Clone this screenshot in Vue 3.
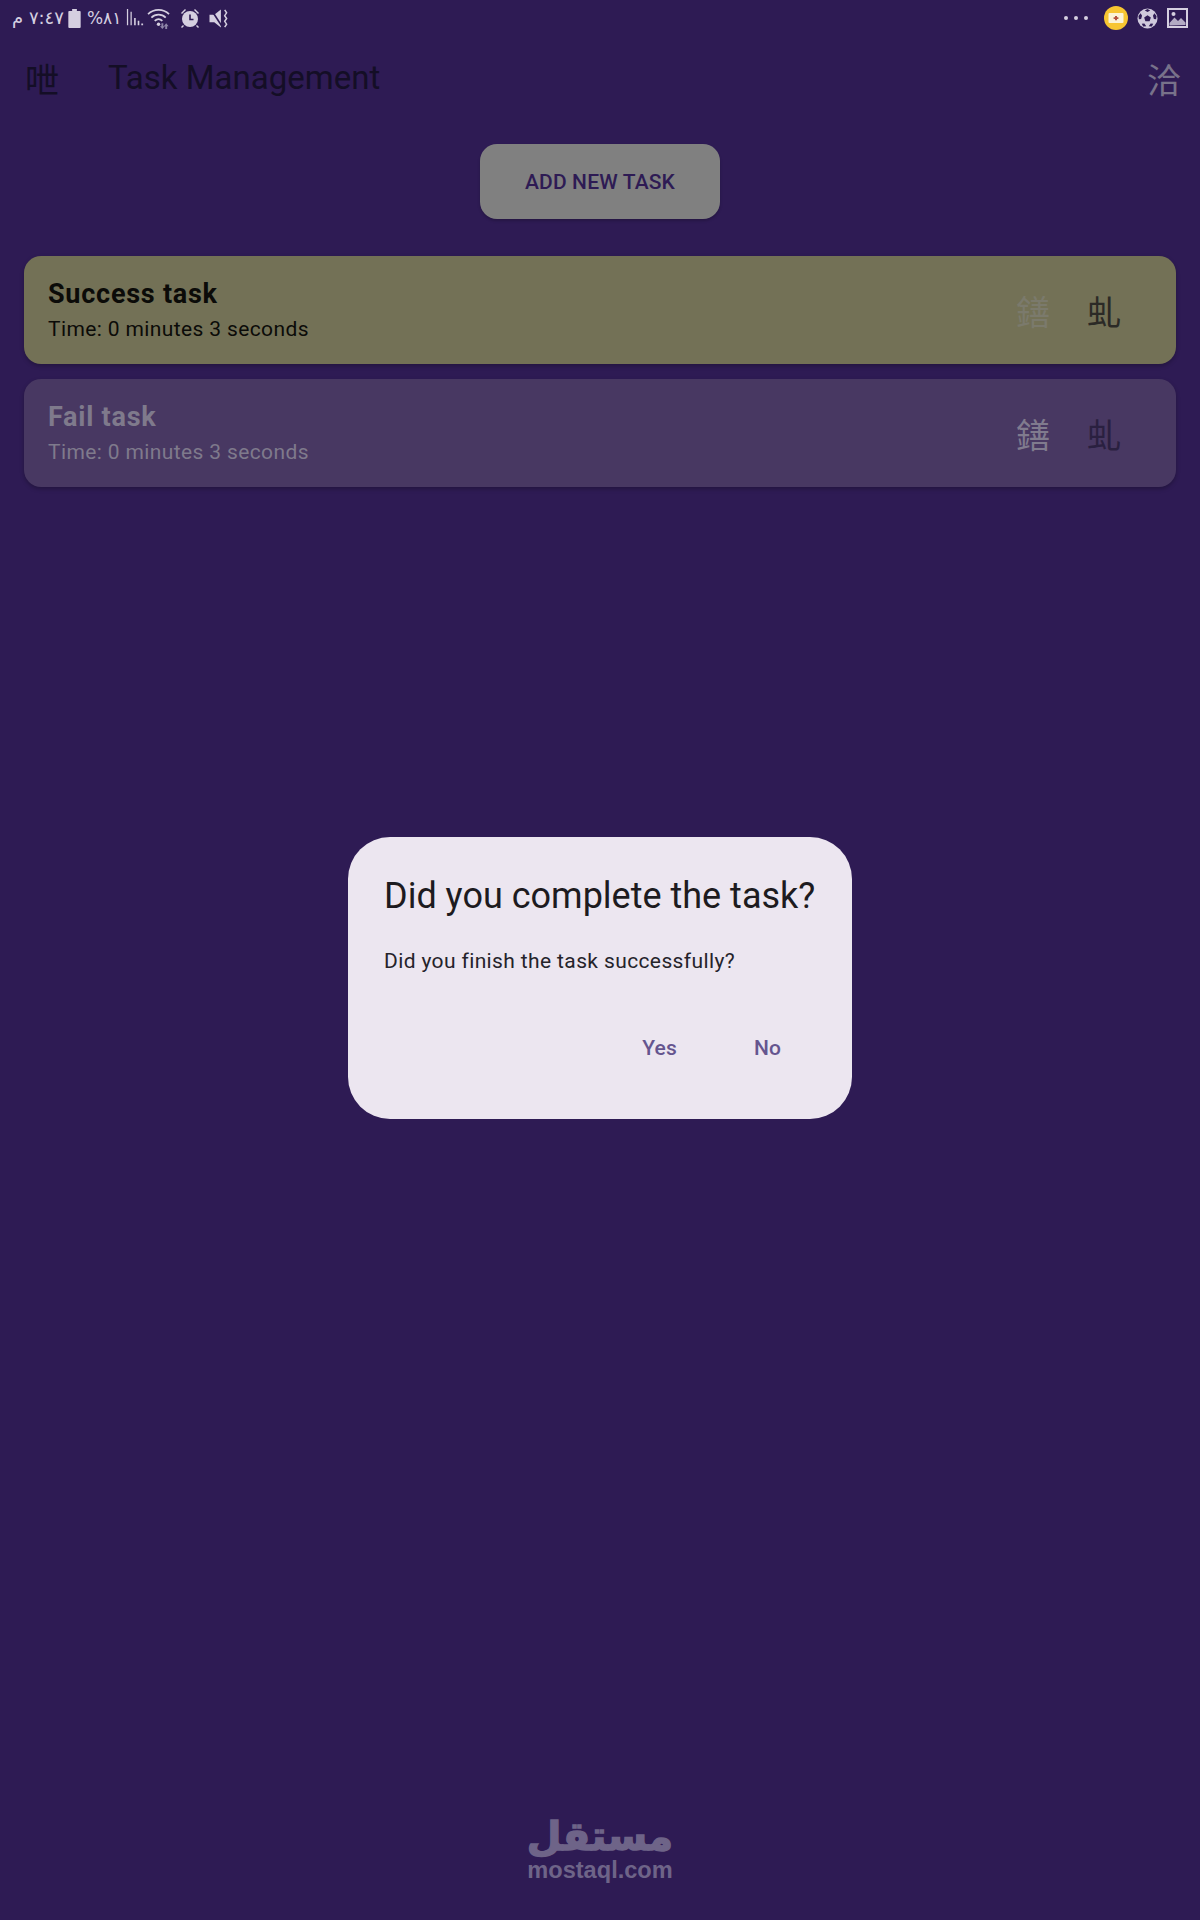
<template>
  <div class="screen">
    <!-- status bar -->
    <div class="status-bar">
      <div class="status-left">
        <span class="status-time" dir="rtl">٧:٤٧ م</span>
        <svg class="ic-battery" viewBox="0 0 13 20"><path d="M4 0h5v2h3a1 1 0 0 1 1 1v16a1 1 0 0 1-1 1H1a1 1 0 0 1-1-1V3a1 1 0 0 1 1-1h3z" /></svg>
        <span class="status-percent" dir="rtl">٨١%</span>
        <svg class="ic-signal" viewBox="0 0 20 20"><path d="M1 0h1.400v18H1zM5 3h1.400v15H5zM9 10h1.800v8H9zM13 13h1.800v5H13zM17 16h2v2h-2z" /></svg>
        <svg class="ic-wifi" viewBox="0 0 26 22">
          <path class="wifi-arc" d="M1 6.500C7 .5 17 .5 23 6.500M4.500 10C8.500 6 15.500 6 19.500 10M8 13.500c2.500-2.500 5.500-2.500 8 0" />
          <circle cx="12" cy="17" r="1.800" />
          <path class="wifi-dim" d="M15 16h2v3h1.500l-2.500 3-2.500-3H15zM21 22h-2v-3h-1.500l2.500-3 2.500 3H21z" />
        </svg>
        <svg class="ic-alarm" viewBox="0 0 20 20">
          <circle cx="10" cy="11" r="8" />
          <path d="M1 5l4-4 1 1-4 4zM19 5l-4-4-1 1 4 4zM3 17l-2 2 1 1 2-2zM17 17l2 2-1 1-2-2z" />
          <path class="alarm-hand" d="M10 6.500V11.500h3.500" />
        </svg>
        <svg class="ic-mute" viewBox="0 0 20 20">
          <path d="M0 6h5l7-5.500v19L5 14H0z" />
          <path class="mute-slash" d="M2 1l11 17" />
          <path class="mute-wave" d="M16 1l2 3-2 3 2 3-2 3 2 3-2 3" />
        </svg>
      </div>
      <div class="status-right">
        <span class="status-dots"><i></i><i></i><i></i></span>
        <svg class="ic-coin" viewBox="0 0 24 24">
          <circle cx="12" cy="12" r="12" fill="#f7c531" />
          <rect x="4.500" y="7" width="15" height="10" rx="1" fill="#fbf3d6" />
          <path d="M11 10h2v1.300h1.400v1.600H13v1.300h-2v-1.300H9.600v-1.600H11z" fill="#b5523f" />
        </svg>
        <svg class="ic-ball" viewBox="0 0 22 22">
          <circle cx="11" cy="11" r="10.500" fill="#cfc9dc" />
          <path d="M11 7.500l3.500 2.500-1.300 4H8.800L7.500 10zM11 1l2.800 1.500L11 4.300 8.200 2.500zM1.500 8.500l2.300-3 1.500 2.500-1 3.500-2.300.3zM20.500 8.500l-2.300-3-1.500 2.500 1 3.500 2.300.3zM6.500 19.500l-1.500-3 2.700-.2 2 2.700zM15.500 19.500l1.500-3-2.700-.2-2 2.700z" fill="#2e1b54" />
        </svg>
        <svg class="ic-image" viewBox="0 0 21 20">
          <path d="M0 0h21v20H0zM2 2v16h17V2z" />
          <path class="image-dim" d="M2.500 17.500V15l5-5.500 3.500 3.500 3-3 4.500 4.500v2.500z" />
          <circle cx="6.500" cy="6" r="2" />
        </svg>
      </div>
    </div>

    <!-- app bar -->
    <header class="app-bar">
      <span class="bar-icon menu-icon">呭</span>
      <h1 class="bar-title">Task Management</h1>
      <span class="bar-icon lang-icon">洽</span>
    </header>

    <div class="add-row">
      <button class="add-button">ADD NEW TASK</button>
    </div>

    <!-- tasks -->
    <div class="task-list">
      <div v-for="task in tasks" :key="task.name" class="task-card" :class="task.state">
        <div class="task-text">
          <div class="task-name">{{ task.name }}</div>
          <div class="task-time">{{ task.time }}</div>
        </div>
        <div class="task-actions">
          <span class="action-icon check-icon">鐥</span>
          <span class="action-icon delete-icon">虬</span>
        </div>
      </div>
    </div>

    <!-- dialog -->
    <div class="dialog-layer">
      <div class="dialog">
        <h2 class="dialog-title">Did you complete the task?</h2>
        <p class="dialog-body">Did you finish the task successfully?</p>
        <div class="dialog-actions">
          <button class="dialog-button">Yes</button>
          <button class="dialog-button">No</button>
        </div>
      </div>
    </div>

    <!-- watermark -->
    <div class="watermark">
      <div class="watermark-ar" dir="rtl">مستقل</div>
      <div class="watermark-en">mostaql.com</div>
    </div>
  </div>
</template>

<script setup>
import { ref } from 'vue'

const tasks = ref([
  { name: 'Success task', time: 'Time: 0 minutes 3 seconds', state: 'done' },
  { name: 'Fail task', time: 'Time: 0 minutes 3 seconds', state: 'failed' }
])
</script>

<style>
html,
body {
  margin: 0;
  background: #2e1b54;
}
</style>

<style scoped>
.screen {
  position: relative;
  width: 1200px;
  height: 1920px;
  overflow: hidden;
  background: #2e1b54;
  font-family: Roboto, "Noto Sans CJK SC", sans-serif;
}

/* status bar */
.status-bar {
  height: 36px;
  padding: 0 12px;
  display: flex;
  align-items: center;
  justify-content: space-between;
  color: #d5cfe0;
}

.status-left,
.status-right {
  display: flex;
  align-items: center;
}

.status-left svg,
.status-right svg {
  fill: #d5cfe0;
  flex: none;
}

.status-time,
.status-percent {
  font-family: "DejaVu Sans", sans-serif;
  font-size: 18px;
  line-height: 20px;
  white-space: nowrap;
}

.status-percent {
  font-size: 17px;
  margin-left: 6px;
}

.ic-battery {
  width: 13px;
  height: 19px;
  margin-left: 4px;
}

.ic-signal {
  width: 18px;
  height: 18px;
  margin-left: 5px;
}

.ic-wifi {
  width: 25px;
  height: 21px;
  margin-left: 3px;
}

.wifi-arc {
  fill: none;
  stroke: #d5cfe0;
  stroke-width: 1.800;
}

.status-left .wifi-dim {
  fill: #8f86a8;
}

.ic-alarm {
  width: 20px;
  height: 20px;
  margin-left: 8px;
}

.alarm-hand {
  fill: none;
  stroke: #2e1b54;
  stroke-width: 1.600;
}

.ic-mute {
  width: 20px;
  height: 19px;
  margin-left: 9px;
}

.mute-slash {
  fill: none;
  stroke: #2e1b54;
  stroke-width: 1.800;
}

.mute-wave {
  fill: none;
  stroke: #d5cfe0;
  stroke-width: 1.600;
}

.status-dots {
  display: flex;
  gap: 6px;
}

.status-dots i {
  width: 4px;
  height: 4px;
  border-radius: 50%;
  background: #d5cfe0;
}

.ic-coin {
  width: 24px;
  height: 24px;
  margin-left: 16px;
}

.ic-ball {
  width: 21px;
  height: 21px;
  margin-left: 9px;
}

.ic-image {
  width: 21px;
  height: 20px;
  margin-left: 9px;
}

.status-right .image-dim {
  fill: #b3abc4;
}

/* app bar */
.app-bar {
  height: 82px;
  padding: 0 19px 0 25px;
  display: flex;
  align-items: center;
}

.bar-icon {
  padding-top: 7px;
  font-size: 34px;
  line-height: 40px;
}

.menu-icon {
  width: 83px;
  color: #140e26;
}

.lang-icon {
  color: #78728a;
}

.bar-title {
  flex: 1;
  margin: 0;
  font-size: 33px;
  font-weight: 400;
  color: #140e26;
}

.add-row {
  margin-top: 26px;
  display: flex;
  justify-content: center;
}

.add-button {
  width: 240px;
  height: 75px;
  border: none;
  border-radius: 17px;
  background: #808080;
  color: #2e1b54;
  font-family: inherit;
  font-size: 21px;
  font-weight: 500;
  letter-spacing: 0.15px;
  box-shadow: 0 2px 3px rgba(0, 0, 0, 0.2);
}

/* tasks */
.task-list {
  margin-top: 37px;
  padding: 0 24px;
  display: flex;
  flex-direction: column;
  gap: 15px;
}

.task-card {
  height: 108px;
  padding: 0 24px;
  box-sizing: border-box;
  border-radius: 17px;
  display: flex;
  align-items: center;
  justify-content: space-between;
  box-shadow: 0 2px 4px rgba(0, 0, 0, 0.25);
}

.task-card.done {
  background: #737156;
  color: #0b0b08;
}

.task-card.failed {
  background: #483862;
  color: #7f7a8c;
}

.task-name {
  margin-bottom: 2px;
  font-size: 27px;
  font-weight: 700;
  line-height: 36px;
  letter-spacing: 0.75px;
}

.task-time {
  font-size: 21px;
  line-height: 30px;
  letter-spacing: 0.375px;
}

.task-actions {
  display: flex;
  gap: 37px;
  padding: 5px 31px 0 0;
}

.action-icon {
  font-size: 34px;
  line-height: 40px;
}

.done .check-icon {
  color: #7b7a6c;
}

.failed .check-icon {
  color: #807b8e;
}

.done .delete-icon {
  color: #2b2a26;
}

.failed .delete-icon {
  color: #2a2040;
}

/* dialog */
.dialog-layer {
  position: absolute;
  inset: 0;
  padding-top: 36px;
  display: flex;
  align-items: center;
  justify-content: center;
}

.dialog {
  width: 504px;
  height: 282px;
  padding: 36px 36px 0;
  box-sizing: border-box;
  border-radius: 42px;
  background: #ece6f0;
  color: #1d1b20;
}

.dialog-title {
  margin: 0;
  font-size: 36px;
  font-weight: 400;
  line-height: 46px;
  white-space: nowrap;
}

.dialog-body {
  margin: 27px 0 0;
  color: #25232a;
  font-size: 21px;
  line-height: 30px;
  letter-spacing: 0.375px;
}

.dialog-actions {
  margin-top: 57px;
  display: flex;
  justify-content: flex-end;
  gap: 77px;
  padding-right: 35px;
}

.dialog-button {
  padding: 0;
  border: none;
  background: none;
  color: #65558f;
  font-family: inherit;
  font-size: 21px;
  font-weight: 500;
  letter-spacing: 0.15px;
  line-height: 30px;
}

/* watermark */
.watermark {
  position: absolute;
  left: 0;
  right: 0;
  bottom: 38px;
  text-align: center;
  color: #6e6488;
  font-weight: 700;
}

.watermark-ar {
  font-family: "DejaVu Sans", sans-serif;
  font-size: 40px;
  line-height: 44px;
  -webkit-text-stroke: 1.500px #6e6488;
}

.watermark-en {
  font-family: "Liberation Sans", sans-serif;
  font-size: 23.600px;
  line-height: 24px;
}
</style>
